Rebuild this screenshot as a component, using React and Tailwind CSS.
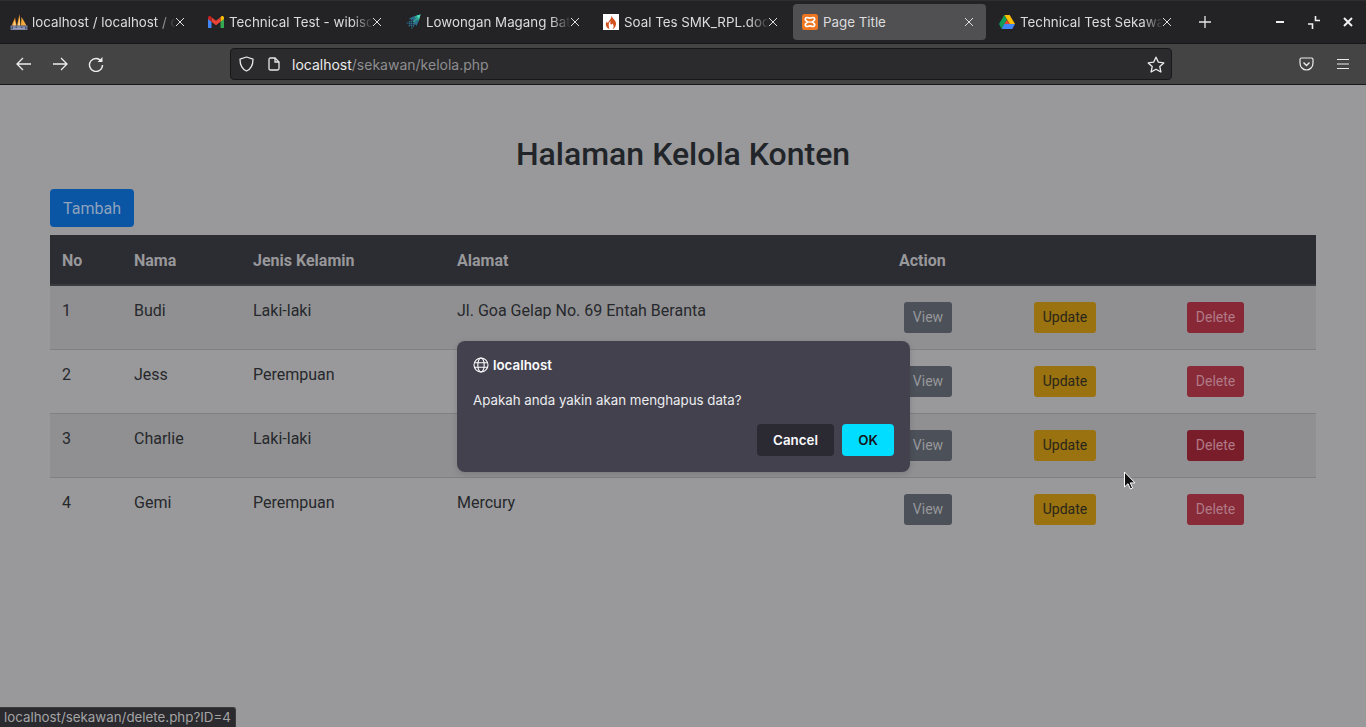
import React from "react";

function PmaIcon() {
  return (
    <svg width="18" height="16" viewBox="0 0 18 16" className="shrink-0">
      <path d="M1.500 11.500 L5 3.500 L6.500 11.500Z" fill="#e8881a" />
      <path d="M7 11.500 L9.500 0 L10.500 11.500Z" fill="#f09a24" />
      <path d="M11 11.500 L11.500 3 L16.500 11.500Z" fill="#f6a93a" />
      <path d="M4.500 6 L6 11.500 L3 11.500Z" fill="#f9d28a" />
      <path d="M9.500 3 L10 11.500 L8 11.500Z" fill="#fbd798" />
      <rect x="1" y="12" width="16" height="3.600" fill="#4a5478" stroke="#97a1c2" strokeWidth="0.700" />
      <path d="M3 13.200h2.500M7 13.200h4M12.500 13.200h2.500M3 14.600h12" stroke="#c0c7dc" strokeWidth="0.700" />
    </svg>
  );
}
function GmailIcon() {
  return (
    <svg width="16" height="12" viewBox="0 0 16 12" className="shrink-0">
      <path d="M0 2.500V12h3.500V5.500L0 2.500Z" fill="#4285f4" />
      <path d="M16 2.500V12h-3.500V5.500L16 2.500Z" fill="#34a853" />
      <path d="M12.500 1.200V5.800L16 3V1.600C16 .3 14.200-.4 13.200.5L12.500 1.200Z" fill="#fbbc04" />
      <path d="M3.500 5.800V1.200L8 4.800l4.500-3.600v4.600L8 9.200 3.500 5.800Z" fill="#ea4335" />
      <path d="M0 1.600V3l3.500 2.800V1.200L2.800.5C1.800-.4 0 .3 0 1.600Z" fill="#c5221f" />
    </svg>
  );
}
function RocketIcon() {
  return (
    <svg width="16" height="16" viewBox="0 0 16 16" className="shrink-0">
      <path d="M15.500 .5 L8.500 2.500 L4 4.500 L6 6 L1 9 L4 10 L3 13 L6 12 L7 15.500 L10 10 L11.500 12 L13.500 7.500Z" fill="#2c6f8e" />
      <path d="M15.500 .5 L9.500 2.200 L11 4.500 L8 8 L8.800 8.800 L12 5.500 L13.800 7Z" fill="#2fa88f" />
      <path d="M15.500 .5 L11.500 1.800 L14.200 4.500Z" fill="#55e0c0" />
      <path d="M2 8.500h7M3 10.500h6M4 12.500h4M5 6.500h3M3.500 7v6M5.500 5v9M7.500 5v10" stroke="#202124" strokeWidth="0.500" />
    </svg>
  );
}
function FlameIcon() {
  return (
    <div className="w-4 h-4 bg-white shrink-0 flex items-center justify-center">
      <svg width="12" height="14" viewBox="0 0 12 14">
        <path d="M6.500 0C7 3 9 4 10.500 6.500 12 9.500 10 13.500 7.500 14c1.500-1.500 1.500-3.500 0-5.500C7 9.500 6 10 5.500 9 5 8 5.500 7 5.500 6 4 7 3 9 4.500 14 1.500 13 0 10 1.500 6.500 2 8 3 8 3.500 7 4.500 5 7 3.500 6.500 0Z" fill="#d2501e" />
      </svg>
    </div>
  );
}
function XamppIcon() {
  return (
    <svg width="16" height="16" viewBox="0 0 16 16" className="shrink-0">
      <rect width="16" height="16" rx="2.500" fill="#ee7620" />
      <path d="M5 3.500C3.500 3.500 3 5 3.500 6 L5.500 8 L3.500 10C3 11 3.500 12.500 5 12.500 6 12.500 6.500 11.800 8 11.800 9.500 11.800 10 12.500 11 12.500 12.500 12.500 13 11 12.500 10 L10.500 8 L12.500 6C13 5 12.500 3.500 11 3.500 10 3.500 9.500 4.200 8 4.200 6.500 4.200 6 3.500 5 3.500Z" fill="none" stroke="#fff" strokeWidth="1.700" />
      <path d="M6 8h4" stroke="#fff" strokeWidth="1.300" />
    </svg>
  );
}
function DriveIcon() {
  return (
    <svg width="16" height="14" viewBox="0 0 16 14" className="shrink-0">
      <path d="M5.300 0h5.400l5.300 9h-5.300Z" fill="#fbbc04" />
      <path d="M5.300 0 L0 9l2.700 5L8 5Z" fill="#0f9d58" />
      <path d="M2.700 14h10.600L16 9H5.300Z" fill="#4285f4" />
      <path d="M5.300 9h5.400L8 5Z" fill="#ea4335" />
    </svg>
  );
}

function CloseX() {
  return (
    <svg width="10" height="10" viewBox="0 0 10 10" className="shrink-0 relative text-[#dedee0]">
      <path d="M1 1l8 8M9 1l-8 8" stroke="currentColor" strokeWidth="1" />
    </svg>
  );
}

function Tab({ icon, title, active, fade = true, cls }) {
  return (
    <div className={`relative h-9 flex items-center pl-[9px] pr-[13px] gap-[5px] rounded-[4px] ${cls} ${active ? "bg-[#505052]" : ""}`}>
      <div className="w-[17px] flex justify-center shrink-0">{icon}</div>
      <div
        className={`flex-1 overflow-hidden whitespace-nowrap pt-[2px] -mr-[6px] text-[13.33px] text-[#dcdcde] ${fade ? "[mask-image:linear-gradient(to_right,black_86%,transparent_100%)]" : ""}`}
      >
        {title}
      </div>
      <CloseX />
    </div>
  );
}

function Browser() {
  return (
    <div className="shrink-0 font-['Inter',sans-serif]">
      <div className="h-11 bg-[#232325] border-t border-[#2e2e30] border-b border-b-[#161618] flex items-center">
        <Tab icon={<PmaIcon />} title="localhost / localhost / db" cls="w-[197px] ml-px" />
        <Tab icon={<GmailIcon />} title="Technical Test - wibisono" cls="w-[197px]" />
        <Tab icon={<RocketIcon />} title="Lowongan Magang Batch" cls="w-[198px]" />
        <Tab icon={<FlameIcon />} title="Soal Tes SMK_RPL.docx" cls="w-[198px]" />
        <Tab icon={<XamppIcon />} title="Page Title" active fade={false} cls="w-[193px] !pl-[8px] !pr-[12px] ml-[2px]" />
        <Tab icon={<DriveIcon />} title="Technical Test Sekawan" cls="w-[196px] ml-[3px]" />
        <div className="w-[40px] flex justify-center">
          <svg width="14" height="14" viewBox="0 0 14 14"><path d="M7 1v12M1 7h12" stroke="#e6e6e8" strokeWidth="1.300" /></svg>
        </div>
        <div className="ml-auto flex items-center gap-[23px] pr-[13px]">
          <svg width="10" height="10" viewBox="0 0 10 10"><path d="M1 5h8" stroke="#f0f0f0" strokeWidth="2" /></svg>
          <svg width="12" height="13" viewBox="0 0 12 13"><path d="M7.500 0v4.500H12M0 8h4.500v5" fill="none" stroke="#f0f0f0" strokeWidth="1.600" /></svg>
          <svg width="10" height="10" viewBox="0 0 10 10"><path d="M1 1l8 8M9 1l-8 8" stroke="#f0f0f0" strokeWidth="2" /></svg>
        </div>
      </div>
      <div className="h-[41px] bg-[#444445] border-b border-[#18181a] flex items-center">
        <div className="flex items-center gap-[18px] pl-[15px] w-[230px] shrink-0">
          <svg width="18" height="16" viewBox="0 0 18 16"><path d="M16 8H2M8 2L2 8l6 6" fill="none" stroke="#ededed" strokeWidth="1.300" /></svg>
          <svg width="18" height="16" viewBox="0 0 18 16"><path d="M2 8h14M10 2l6 6-6 6" fill="none" stroke="#ededed" strokeWidth="1.300" /></svg>
          <svg width="16" height="16" viewBox="0 0 16 16" className="ml-px"><path d="M13.500 5.500A6.500 6.500 0 1 0 14.500 9" fill="none" stroke="#ededed" strokeWidth="1.400" /><path d="M14.500 1v5h-5Z" fill="#ededed" /></svg>
        </div>
        <div className="h-8 w-[942px] bg-[#2b2b2d] border border-[#18181a] rounded-[4px] flex items-center pl-2 pr-[6px]">
          <svg width="15" height="16" viewBox="0 0 15 16" className="shrink-0"><path d="M7.500 1 L14 3.200 C14 9 12 13 7.500 15 3 13 1 9 1 3.200Z" fill="none" stroke="#e8e8e8" strokeWidth="1.300" strokeLinejoin="round" /></svg>
          <svg width="12" height="14" viewBox="0 0 12 14" className="shrink-0 ml-[14px]"><path d="M1 2.500C1 1.500 1.500 1 2.500 1H7l4 4v6.500c0 1-.5 1.500-1.500 1.500h-7C1.500 13 1 12.500 1 11.500Z" fill="none" stroke="#e8e8e8" strokeWidth="1.300" /><path d="M7 1v4h4" fill="none" stroke="#e8e8e8" strokeWidth="1.300" /></svg>
          <div className="ml-[12px] text-[14px] text-[#ececec]">localhost<span className="text-[#8e8e90]">/sekawan/kelola.php</span></div>
          <svg width="18" height="17" viewBox="0 0 18 17" className="ml-auto shrink-0"><path d="M9 1.200l2.400 5 5.400.7-4 3.700 1.100 5.400L9 13.300l-4.900 2.700 1.100-5.400-4-3.700 5.400-.7Z" fill="none" stroke="#ececec" strokeWidth="1.300" strokeLinejoin="round" /></svg>
        </div>
        <div className="ml-auto flex items-center gap-[22px] pr-[16px]">
          <svg width="15" height="14" viewBox="0 0 15 14"><path d="M2.500 1h10C13.500 1 14 1.500 14 2.500V6c0 4-3 7-6.500 7S1 10 1 6V2.500C1 1.500 1.500 1 2.500 1Z" fill="none" stroke="#ececec" strokeWidth="1.200" /><path d="M4.500 5.500l3 3 3-3" fill="none" stroke="#ececec" strokeWidth="1.400" /></svg>
          <svg width="14" height="12" viewBox="0 0 14 12"><path d="M1 1.500h12M1 6h12M1 10.500h12" stroke="#ececec" strokeWidth="1.200" /></svg>
        </div>
      </div>
    </div>
  );
}

const rows = [
  ["1", "Budi", "Laki-laki", "Jl. Goa Gelap No. 69 Entah Beranta", "bg-[#909092]", "bg-[#882836]"],
  ["2", "Jess", "Perempuan", "", "", "bg-[#882a38]"],
  ["3", "Charlie", "Laki-laki", "", "bg-[#909092]", "bg-[#7a1d2a]"],
  ["4", "Gemi", "Perempuan", "Mercury", "", "bg-[#882a38]"],
];

const cols = "grid grid-cols-[72px_119px_204px_442px_135px_153px_130px_11px]";

function Btn({ cls, children }) {
  return <div className={`inline-flex items-center justify-center h-[31px] rounded-[3px] text-[14px] ${cls}`}>{children}</div>;
}

function Page() {
  return (
    <main className="flex-1 bg-[#99999b] px-[50px] font-['Roboto',sans-serif] text-[#26282c] min-h-0">
      <h1 className="text-[32px] leading-[38px] font-medium text-center mt-[50px] text-[#212529]">Halaman Kelola Konten</h1>
      <div className="mt-4 h-[38px] w-[84px] pt-[2px] rounded-[4px] bg-[#0b55a5] text-[#8ea3bd] text-[16px] flex items-center justify-center">Tambah</div>
      <div className="mt-2 w-[1266px]">
        <div className={`${cols} h-[51px] pt-[2px] bg-[#2c2d33] border-b-2 border-[#3a3b3f] items-center font-bold text-[16px] text-[#98989b]`}>
          <div className="pl-3">No</div>
          <div className="pl-3">Nama</div>
          <div className="pl-3">Jenis Kelamin</div>
          <div className="pl-3">Alamat</div>
          <div className="pl-3 col-span-4">Action</div>
        </div>
        {rows.map((r) => (
          <div key={r[0]} className={`${cols} h-16 ${r[0] === "4" ? "" : "border-b border-[#808082]"} ${r[4]} text-[16px]`}>
            <div className="pl-3 pt-[15px] leading-[20px]">{r[0]}</div>
            <div className="pl-3 pt-[15px] leading-[20px]">{r[1]}</div>
            <div className="pl-3 pt-[15px] leading-[20px]">{r[2]}</div>
            <div className="pl-3 pt-[15px] leading-[20px]">{r[3]}</div>
            <div className="pl-[17px] pt-4"><Btn cls="w-[48px] bg-[#4c5058] text-[#97989c]">View</Btn></div>
            <div className="pl-3 pt-4"><Btn cls="w-[62px] bg-[#9a7210] text-[#29261c]">Update</Btn></div>
            <div className="pl-[12px] pt-4"><Btn cls={`w-[57px] text-[#b07a86] ${r[5]}`}>Delete</Btn></div>
          </div>
        ))}
      </div>
    </main>
  );
}

export default function App() {
  return (
    <div className="relative w-[1366px] h-[727px] overflow-hidden flex flex-col">
      <Browser />
      <Page />

      <div className="absolute left-[457px] top-[341px] w-[453px] h-[131px] rounded-[8px] bg-[#42414d] font-['Inter',sans-serif] px-4 pt-4 text-[#fbfbfe] shadow-[0_2px_6px_rgba(0,0,0,0.15)]">
        <div className="flex items-center gap-[4px] h-4">
          <svg width="16" height="16" viewBox="0 0 16 16"><g fill="none" stroke="#fbfbfe" strokeWidth="1.100"><circle cx="8" cy="8" r="7" /><ellipse cx="8" cy="8" rx="3.200" ry="7" /><path d="M1.200 5.800h13.600M1.200 10.200h13.600" /></g></svg>
          <span className="text-[13.33px] font-semibold leading-4">localhost</span>
        </div>
        <div className="mt-[19px] text-[13.3px] leading-[17px] text-[#ededf0]">Apakah anda yakin akan menghapus data?</div>
        <div className="mt-[15px] flex justify-end gap-2">
          <div className="w-[77px] h-8 pt-px rounded-[4px] bg-[#2b2a33] flex items-center justify-center text-[13.33px] font-semibold">Cancel</div>
          <div className="w-[52px] h-8 pt-px rounded-[4px] bg-[#00ddff] flex items-center justify-center text-[13.33px] font-semibold text-[#15141a]">OK</div>
        </div>
      </div>

      <div className="absolute left-0 bottom-0 h-[20px] w-[236px] bg-[#2b2a2e] rounded-tr-[3px] border-t border-r border-[#3c3c3e] font-['Inter',sans-serif] text-[13.33px] leading-[19px] pl-1 text-[#a4a4a6] whitespace-nowrap">localhost/sekawan/delete.php?ID=4</div>

      <svg className="absolute left-[1123px] top-[471px]" width="14" height="20" viewBox="0 0 14 20"><path d="M1.500 1v15l3.500-3.300 2.400 5.300 2.200-1-2.300-5.100h4.700Z" fill="#111" stroke="#fff" strokeWidth="1" /></svg>
    </div>
  );
}
